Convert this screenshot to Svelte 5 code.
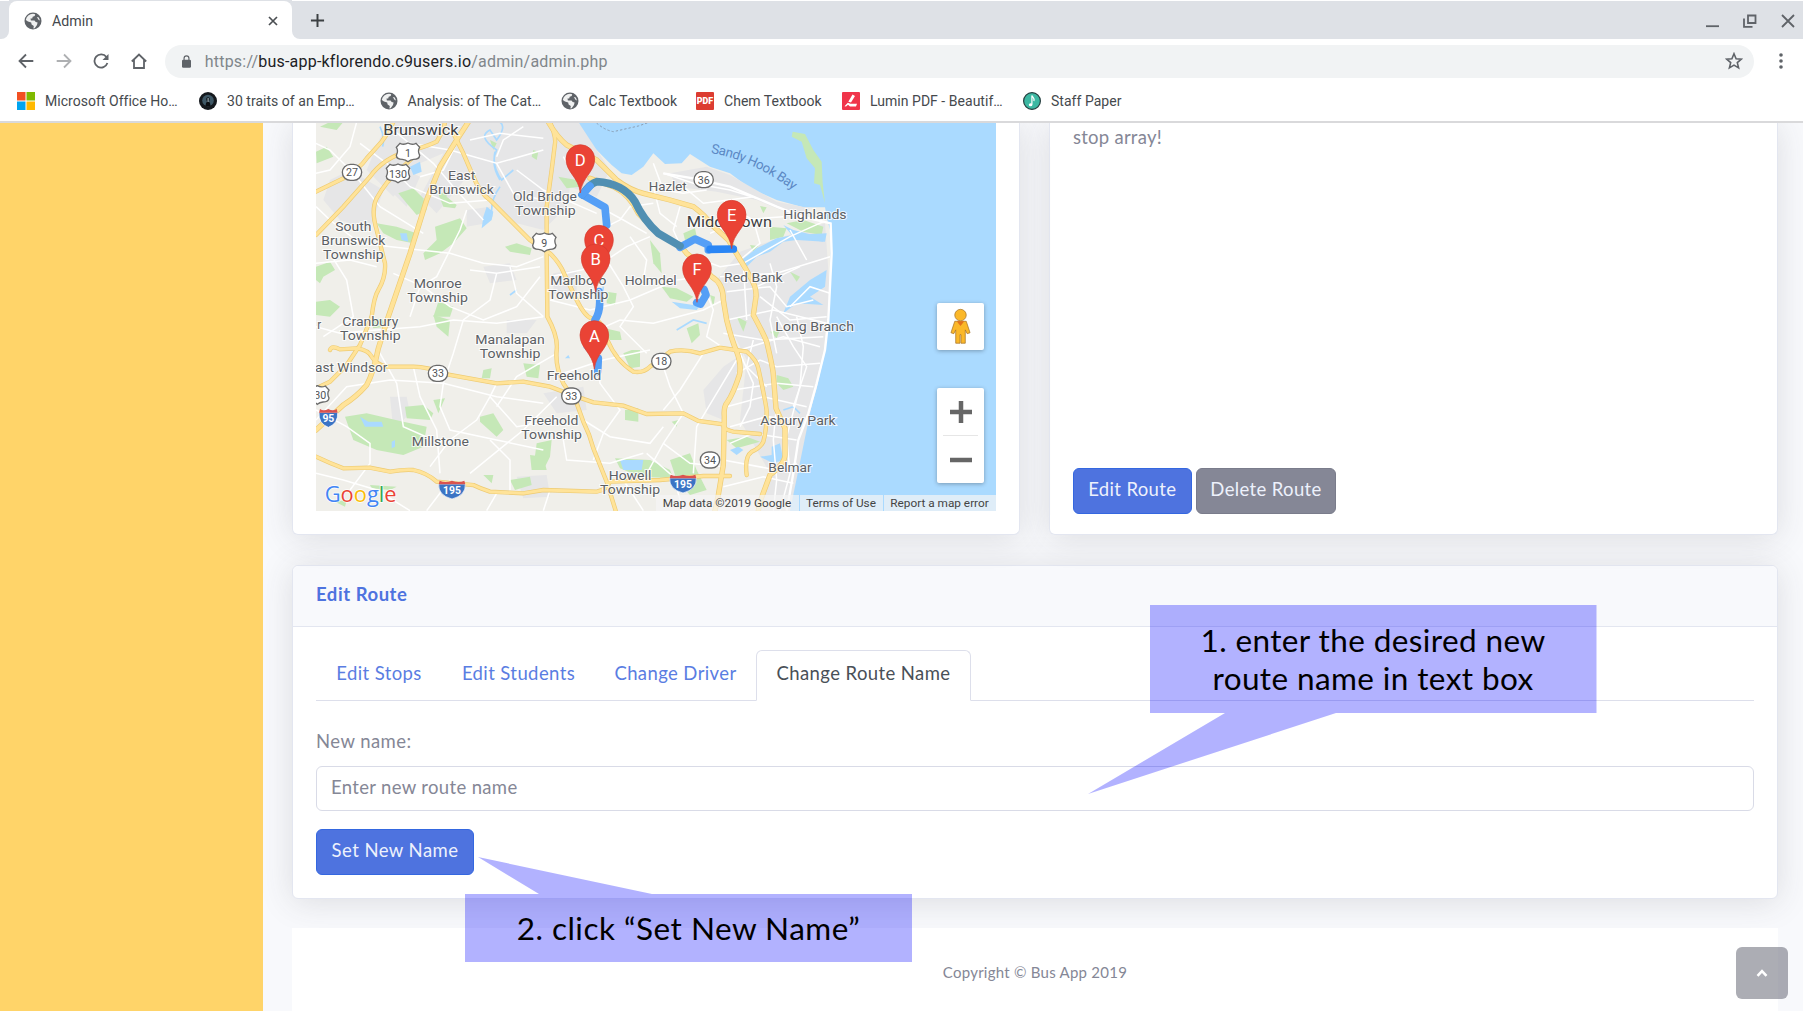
<script>
  const bookmarks = [
    { label: 'Microsoft Office Ho…', icon: 'ms' },
    { label: '30 traits of an Emp…', icon: 'traits' },
    { label: 'Analysis: of The Cat…', icon: 'globe' },
    { label: 'Calc Textbook', icon: 'globe' },
    { label: 'Chem Textbook', icon: 'pdf' },
    { label: 'Lumin PDF - Beautif…', icon: 'lumin' },
    { label: 'Staff Paper', icon: 'staff' }
  ];
  const tabs = ['Edit Stops', 'Edit Students', 'Change Driver', 'Change Route Name'];

  // Map geometry is in a space of three units per pixel.
  const highways = [
    'M18 215L100 175Q150 145 170 115L215 65Q238 35 250 6',
    'M18 345L100 260L180 170Q220 115 290 95Q350 80 380 65L400 30L405 6',
    'M185 590Q192 530 205 510Q228 470 225 430L200 330Q182 270 200 235Q230 180 270 150L310 110',
    'M185 590L150 675L110 735L60 785L18 805',
    'M430 40L460 100L490 170Q510 220 540 240L600 300L660 360L720 400Q750 430 762 460L800 540Q825 590 845 595Q880 600 892 660Q920 725 970 755Q1000 760 1020 740L1080 695Q1120 685 1170 700L1230 683L1310 695Q1340 720 1345 745Q1370 860 1370 875Q1370 930 1360 965Q1350 985 1325 995Q1303 1010 1310 1065',
    'M720 6Q738 50 735 70L725 150L710 260L710 400L712 590Q745 650 740 690Q735 740 760 790L800 850L820 905Q840 945 850 985L890 1085L917 1172',
    'M60 690Q65 675 90 688L140 685Q175 690 185 710Q200 735 230 740L310 740Q350 740 420 765L560 790L640 785L720 800L800 830L850 847L940 857L1010 882L1120 880L1165 903L1240 913Q1240 930 1270 935L1350 942',
    'M18 1010Q60 1030 100 1045L180 1043L240 1055Q280 1048 310 1050Q350 1058 380 1085L490 1095Q510 1105 540 1115L640 1120L700 1110L860 1115Q890 1110 900 1085L1050 1080L1180 1068L1260 1068'
  ];
  const trunks = [
    'M475 6L440 60L390 140L350 240L300 400L235 590L205 685Q190 760 170 795Q140 830 100 855L18 930',
    'M715 6Q740 50 770 75L860 120L920 180Q960 210 1000 220L1080 240L1150 260Q1190 290 1200 310L1255 360L1285 410Q1310 450 1320 470Q1340 500 1338 530L1330 585Q1360 640 1370 665Q1390 750 1390 765L1398 865L1425 925L1425 1005Q1425 1030 1380 1065L1350 1145L1345 1172',
    'M840 175L910 200Q960 225 985 280L1050 345L1110 375L1130 400Q1180 440 1205 470Q1240 490 1240 540L1250 600Q1265 660 1280 695Q1295 735 1288 765Q1270 820 1253 845Q1240 860 1243 890L1240 1035L1225 1125L1215 1172'
  ];
  const streets = [
    'M18 70L60 90L130 160L210 260L340 340', 'M140 6L120 80L60 150L18 160', 'M150 70L230 130L300 200L420 250L540 240',
    'M250 30L370 130L430 200L520 300', 'M440 70L400 150L330 170', 'M300 70L420 90L560 130L700 90', 'M480 60L570 40L700 55',
    'M560 110L580 60L640 20', 'M560 130L610 220L700 240', 'M620 150L700 210L860 280', 'M760 110L800 180L830 240L940 300L1010 340',
    'M18 260L60 300L150 370L330 390L420 400L520 430L620 440L700 410', 'M18 430L120 420L200 440', 'M60 400L110 480L130 590L40 650',
    'M250 460L340 500L420 560L520 600L620 560L690 470', 'M300 590L330 500L380 470L450 330L470 270', 'M480 450L560 460L690 440', 'M560 460L540 540L460 600L430 700L400 790',
    'M600 440L620 520L700 590', 'M720 470L860 440L950 380L1020 350', 'M720 540L840 570L960 540L1100 480L1180 470', 'M890 320L930 300L960 260L1030 250',
    'M890 420L940 500L970 560L930 620L1010 700', 'M960 350L1010 420L1000 480', 'M840 640L930 600L1030 610L1180 570L1240 540',
    'M18 620L90 640L200 630L330 620L430 600L560 610L700 590', 'M18 900L110 800L240 780L400 790L560 830L700 850', 'M210 700L260 790L280 920L370 960',
    'M310 740L330 830L380 930L390 1060', 'M400 790L390 860L420 930L560 960L700 990', 'M560 790L540 830L500 900L420 960L360 1040',
    'M540 830L620 920L740 900', 'M540 960L600 1020L600 1110', 'M18 870L110 920L180 970L180 1030L120 1110', 'M18 1060L100 1080L200 1110L300 1172',
    'M420 1080L350 1172', 'M740 700L620 770L560 860', 'M740 830L640 930L480 1060', 'M760 760L880 720L1020 690', 'M860 690L870 790L930 870L880 940L850 1020',
    'M760 960L770 1020L900 1030L1000 1000', 'M820 900L900 950L1020 970L1060 920', 'M1060 740L1080 800L1120 880L1060 970L1000 1080', 'M1180 700L1110 810L1060 870',
    'M1280 720L1220 820L1160 920L1150 1060', 'M1060 970L1140 1030L1240 1040', 'M1010 1000L1090 1070L1120 1172', 'M560 1120L530 1172', 'M720 1110L700 1172', 'M940 1080L1000 1172',
    'M1030 130L1060 210L1120 220L1190 210', 'M1060 160L1150 190L1260 210L1340 235', 'M1120 200L1180 250L1330 230', 'M1030 200L1050 280L1100 320', 'M1110 260L1090 330L1110 375',
    'M1240 250L1330 300L1350 370L1290 420', 'M1200 340L1290 300L1420 290', 'M1150 410L1230 440L1300 430L1440 350L1540 305', 'M1230 470L1400 460L1560 410', 'M1440 330L1490 420',
    'M1300 430L1310 600', 'M1340 500L1470 440', 'M1350 530L1440 600L1550 590', 'M1250 515L1380 500L1430 560L1510 540', 'M1170 470L1210 570L1190 650L1250 690', 'M1380 430L1400 500L1380 600L1400 700',
    'M1250 600L1390 570L1550 610', 'M1240 640L1360 660L1540 650', 'M1290 690L1420 650L1530 680', 'M1280 760L1350 720L1400 740L1530 730', 'M1270 810L1400 790L1510 800', 'M1250 860L1360 830L1490 860',
    'M1260 920L1370 890L1480 900', 'M1260 970L1330 940L1460 960', 'M1240 1020L1400 1050L1460 1030', 'M1240 1100L1360 1070L1450 1090', 'M1400 590L1450 680L1490 740L1450 860', 'M1460 590L1480 680L1470 800L1430 950L1440 1060L1410 1172',
    'M1290 700L1330 790L1320 860L1290 920', 'M1330 660L1310 740L1370 800', 'M1400 850L1390 960L1400 1080L1390 1172', 'M1440 560L1500 500L1560 520'
  ];
  const parks = [
    'M18 95L50 80L70 110L20 130Z', 'M30 20L60 6L100 6L80 30Z', 'M18 440L60 425L75 450L40 470L30 490L18 480Z', 'M265 220L310 205L340 235L350 270L320 285L290 250Z',
    'M200 310L260 320L320 340L310 370L260 360L220 340Z', 'M375 320L450 295L470 325L430 370L390 400L345 420L340 400L380 360Z', 'M385 222L410 215L410 230L440 255L435 265L400 260Z', 'M745 170L800 180L810 200L770 205Z',
    'M585 380L620 370L665 385L660 405L600 395Z', 'M385 545L430 560L420 590L370 590Z', 'M18 545L60 540L90 560L60 590L18 585Z', 'M890 515L920 520L915 555L890 550Z', 'M670 90L685 95L680 120L665 110Z', 'M540 60L560 70L550 90Z',
    'M105 890L170 880L280 905L350 920L340 980L280 1005L200 990L130 960Z', 'M285 860L340 855L370 880L360 900L290 895Z', 'M370 840L405 835L385 880Z', 'M510 890L550 880L580 930L560 950L510 905Z', 'M370 585L420 600L415 650L380 620Z',
    'M180 600L215 595L230 620L190 625Z', 'M640 730L690 735L685 775L650 770Z', 'M520 750L545 745L540 775L515 775Z', 'M940 700L965 690L990 690L990 740L960 745Z', 'M885 625L930 635L935 660L900 660Z', 'M945 870L985 865L985 905L945 900Z',
    'M680 970L725 960L720 1010L700 1050L670 1045Z', 'M660 1005L700 1010L710 1050L665 1050Z', 'M520 1065L550 1065L545 1090Z', 'M600 1080L660 1070L665 1095L615 1110Z', 'M915 1015L1020 1020L1080 1050L1090 1075L990 1070L930 1045Z', 'M180 1095L260 1100L240 1110L185 1105Z',
    'M1020 360L1050 400L1055 460L1030 430Z', 'M1120 340L1155 325L1160 350L1125 360Z', 'M1055 500L1100 505L1150 530L1130 545L1080 535Z', 'M1350 258L1370 262L1360 280Z', 'M1380 320L1430 325L1420 350L1380 360Z', 'M1430 310L1480 300L1540 320L1535 345L1480 335Z',
    'M1320 375L1345 378L1330 395Z', 'M1440 455L1470 470L1460 485Z', 'M1200 525L1215 530L1210 560Z', 'M1130 625L1165 610L1170 645L1145 670Z', 'M1280 590L1310 605L1300 635Z', 'M1380 635L1410 630L1400 655Z', 'M1400 765L1435 775L1450 800L1420 810L1400 790Z',
    'M1250 960L1310 950L1350 965L1280 985Z', 'M1080 1020L1140 1000L1160 1050L1190 1110L1140 1125L1100 1080Z', 'M1085 905L1105 900L1100 920Z', 'M75 1145L110 1140L105 1160Z'
  ];
  const labels = [
    ['Brunswick', 333, 44, 226, 44, true], ['East', 455, 180, 82], ['Brunswick', 455, 222, 194], ['Old Bridge', 705, 244, 192], ['Township', 706, 286, 182],
    ['South', 130, 332, 108], ['Brunswick', 130, 374, 192], ['Township', 130, 416, 182], ['Monroe', 383, 503, 144], ['Township', 383, 545, 182],
    ['Marlboro', 805, 496, 168], ['Township', 805, 538, 180], ['Holmdel', 1022, 494, 156], ['Hazlet', 1073, 213, 114], ['Middletown', 1258, 320, 256, 44, true],
    ['Highlands', 1515, 297, 190], ['Red Bank', 1330, 487, 176], ['Cranbury', 181, 617, 168], ['Township', 181, 659, 182], ['r', 28, 628, 12],
    ['East Windsor', 112, 755, 240], ['Manalapan', 600, 672, 208], ['Township', 600, 714, 182], ['Freehold', 792, 780, 164], ['Freehold', 724, 916, 162],
    ['Township', 725, 958, 182], ['Millstone', 391, 977, 172], ['Howell', 960, 1079, 128], ['Township', 960, 1121, 180], ['Long Branch', 1514, 632, 236], ['Asbury Park', 1464, 915, 226], ['Belmar', 1440, 1056, 130]
  ];
  const circles = [[126, 157, '27'], [1181, 179, '36'], [384, 760, '33'], [784, 828, '33'], [1054, 724, '18'], [1200, 1020, '34']];
  const usShields = [[294, 97, '1'], [264, 160, '130'], [703, 367, '9'], [22, 825, '130']];
  const interstates = [[55, 893, '95', 56], [426, 1108, '195', 80], [1119, 1090, '195', 80]];
  const pins = [[867, 461, 'C'], [857, 517, 'B'], [811, 219, 'D'], [1265, 386, 'E'], [1161, 547, 'F'], [853, 747, 'A']];
</script>

{#snippet globe()}
  <svg class="ico" viewBox="0 0 18 18"><circle cx="9" cy="9" r="8.5" fill="#5f6368" /><path d="M9 1.8l2.2.5-.5 1.7-2 .8-.5 1.6-1.7.2.4 1.9h3.6l1.2 1.5 1.9.5-.6 2.500-2.300 3.200-1.300.300.400-2.600-2.200-1.300-.400-2-3.200-1L1.800 8A7.300 7.300 0 0 1 9 1.800zM12.800 5l2 .400 1.200 3-1.500-.700z" fill="#fff" opacity=".9" /></svg>
{/snippet}

<div class="window">
  <header class="chrome">
    <div class="strip">
      <div class="prev"></div>
      <div class="tab">
        {@render globe()}
        <span>Admin</span>
        <svg class="close" viewBox="0 0 12 12"><path d="M2 2l8 8M10 2l-8 8" /></svg>
      </div>
      <div class="fill"><svg class="plus" viewBox="0 0 16 16"><path d="M8 1v14M1 8h14" /></svg></div>
      <div class="winctl">
        <svg viewBox="0 0 14 14"><path d="M0 12.2h13" /></svg>
        <svg viewBox="0 0 14 14"><path d="M5 1.5h7.5V9H5zM1 4.5v8.3h8.5" /></svg>
        <svg viewBox="0 0 14 14"><path d="M1 1l12 12M13 1L1 13" /></svg>
      </div>
    </div>
    <div class="toolbar">
      <svg class="nav" viewBox="0 0 16 16"><path d="M15.3 8H1.6M8 1.5L1.5 8 8 14.5" /></svg>
      <svg class="nav dim" viewBox="0 0 16 16"><path d="M.7 8h13.7M8 1.5L14.5 8 8 14.5" /></svg>
      <svg class="nav" viewBox="0 0 16 16"><path d="M13.4 4A6.6 6.6 0 1 0 14.400 10" /><path d="M15.500 1v6h-6z" class="solid" /></svg>
      <svg class="nav" viewBox="0 0 16 16"><path d="M.8 8.500L8 1.500l7.200 7M3 7v8h10V7" /></svg>
      <div class="omni">
        <svg class="lock" viewBox="0 0 10 14"><path d="M1.500 5h7Q10 5 10 6.500v6Q10 14 8.500 14h-7Q0 14 0 12.500v-6Q0 5 1.500 5z" fill="#5f6368" /><path d="M2.300 6V3.500a2.700 2.700 0 0 1 5.400 0V6" fill="none" stroke="#5f6368" stroke-width="1.300" /></svg>
        <div class="url">https://<b>bus-app-kflorendo.c9users.io</b>/admin/admin.php</div>
        <svg class="star" viewBox="0 0 18 18"><path d="M9 1.700l2.100 5 5.300.4-4.100 3.500 1.300 5.300L9 13.100l-4.600 2.800 1.300-5.300L1.600 7.100l5.300-.4z" /></svg>
      </div>
      <svg class="dots" viewBox="0 0 4 16"><circle cx="2" cy="2" r="1.800" /><circle cx="2" cy="8" r="1.800" /><circle cx="2" cy="14" r="1.800" /></svg>
    </div>
    <nav class="bookmarks">
      {#each bookmarks as b}
        <div class="bm">
          {#if b.icon === 'ms'}
            <svg class="ico" viewBox="0 0 18 18"><path d="M0 0h8.500v8.500H0z" fill="#f25022" /><path d="M9.500 0H18v8.500H9.500z" fill="#7fba00" /><path d="M0 9.500h8.500V18H0z" fill="#00a4ef" /><path d="M9.500 9.500H18V18H9.500z" fill="#ffb900" /></svg>
          {:else if b.icon === 'traits'}
            <svg class="ico" viewBox="0 0 18 18"><circle cx="9" cy="9" r="9" fill="#15191e" /><circle cx="9" cy="8.500" r="5.800" fill="#3f5866" /><path d="M6.500 14q.2-3.500 1.500-4.500-1-1.500-.6-3.500Q9 4.300 10.600 6q.4 2-.6 3.500 1.400 1 1.500 4.500z" fill="#0b0e12" /><path d="M8.600 6h1v4h-1z" fill="#b9ced8" /></svg>
          {:else if b.icon === 'globe'}
            {@render globe()}
          {:else if b.icon === 'pdf'}
            <svg class="ico" viewBox="0 0 18 18"><rect width="18" height="18" rx="1" fill="#dc3c31" /><text x="9" y="12.300" text-anchor="middle" textLength="16.500" lengthAdjust="spacingAndGlyphs" class="pdf">PDF</text></svg>
          {:else if b.icon === 'lumin'}
            <svg class="ico" viewBox="0 0 18 18"><rect width="18" height="18" rx="1" fill="#f0354b" /><path d="M10.500 2.500L13 4 9 10.500l-2.700-.8zM5.800 10.700l2.700 1H15l-1 2.800H8l-2-1.700-2 1.700-1.500-.3z" fill="#fff" /></svg>
          {:else}
            <svg class="ico" viewBox="0 0 18 18"><circle cx="9" cy="9" r="8.400" fill="#3cb8a2" stroke="#263d3e" stroke-width="1.200" /><ellipse cx="7.600" cy="12.700" rx="1.800" ry="1.500" fill="#fff" /><path d="M8.900 12.500V3.500c.5 2 3 2.200 2 5.500" fill="none" stroke="#fff" stroke-width="1.200" /></svg>
          {/if}
          <span>{b.label}</span>
        </div>
      {/each}
    </nav>
  </header>

  <div class="page">
    <aside class="sidebar"></aside>
    <main>
      <div class="row">
        <section class="card mapcard">
          <svg class="map" viewBox="18 6 2040 1167" preserveAspectRatio="none">
            <path d="M0 0H2060V1180H0z" fill="#aadaff" />
            <path d="M0 0H805L820 60L860 90L905 135L935 160L965 165L1000 140L1030 100L1065 132L1115 130L1140 102L1200 140L1260 160L1320 205L1400 240L1480 262L1545 262L1552 300L1563 340L1560 520L1553 600L1547 685L1520 805L1500 875L1475 965L1460 1045L1445 1125L1430 1180H0z" fill="#f0efea" />
            <g fill="#e6e6e7">
              <path d="M230 6H805L860 90L900 150L860 230L780 200L770 260L700 330L620 310L540 240L480 160L380 280L330 230L400 100L330 130L250 230L170 150z" />
              <path d="M60 180L120 150L220 210L180 330L90 300L40 240zM250 130L330 170L290 260L230 200zM470 270L540 260L530 310L470 320zM730 460L800 450L800 530L730 520zM590 600L680 600L650 640L590 640zM700 820L820 800L830 870L740 880zM240 830L290 830L300 880L250 930z" />
              <path d="M1080 160L1190 140L1260 165L1400 245L1500 265L1460 290L1340 240L1220 215L1100 200z" />
              <path d="M1290 395L1420 350L1545 310L1560 520L1540 700L1500 880L1440 1173H1340L1380 1060L1290 900L1310 720L1250 600L1220 480z" />
              <path d="M1180 810L1240 740L1300 700L1240 900L1190 880zM620 1070L710 1065L720 1130L640 1135zM520 440L600 430L620 480L540 490z" />
            </g>
            <g fill="#c5e8b7">{#each parks as d}<path {d} />{/each}<path d="M1448 35L1485 42L1510 90L1535 125L1538 190L1545 250L1530 195L1512 190L1515 145L1490 115L1475 65L1445 50z" /></g>
            <g fill="#aadaff">
              <path d="M1295 420L1340 385L1400 355L1450 345L1550 340L1545 365L1460 360L1420 365L1380 395L1340 410L1310 440z" />
              <path d="M1440 530L1500 480L1550 450L1545 500L1500 530L1540 555L1460 550L1420 580zM1420 315L1450 330L1530 350L1540 365L1450 350zM1385 980L1410 970L1420 1020L1390 1030L1350 1010L1385 1005zM1260 990L1285 980L1300 990L1280 1005zM930 1020L1000 1020L995 1050L940 1050zM150 890L175 905L215 905L220 920L165 920zM1085 545L1150 555L1180 545L1160 570L1110 565z" />
              <path d="M270 340L290 340L295 365L275 360zM530 260L550 275L545 300L515 325L520 290zM300 140L330 125L335 155L310 165zM765 715L775 705L780 715zM245 965L255 960L255 980L245 985z" />
            </g>
            <g class="brook"><path d="M570 180Q540 130 560 90Q500 50 540 30L560 60Q590 20 570 6M570 200Q540 240 545 290M555 95Q545 140 575 180L610 150M210 20Q225 50 218 80M1100 630L1150 600L1190 610M880 500L870 590M600 525L620 510M1420 870L1450 860L1470 880M820 680L840 700" /></g>
            <g class="street">{#each streets as d}<path {d} />{/each}</g>
            <path d="M1060 160L1150 175L1260 200L1400 260L1475 290L1540 305L1562 310L1565 400L1555 600L1545 690L1520 790L1495 880L1465 960L1450 1060L1430 1172" class="shore" />
            <g class="edge">{#each highways as d}<path {d} />{/each}</g>
            <g class="edge thick">{#each trunks as d}<path {d} />{/each}</g>
            <g class="road">{#each highways as d}<path {d} />{/each}</g>
            <g class="road thick">{#each trunks as d}<path {d} />{/each}</g>
            <path d="M850 0Q880 30 910 35L985 18L1020 6" fill="none" stroke="#8a9fb5" stroke-width="3" stroke-dasharray="7 6" />
            <g class="route">
              <path d="M817 224L885 262L890 315M867 515Q875 570 855 600L850 640M865 715L863 755M1110 382L1155 357L1195 375L1195 390M1182 508L1188 525L1172 552L1160 548" />
              <path d="M817 224Q840 190 860 185Q940 190 975 245Q1000 300 1045 340L1110 378" class="steel" />
              <path d="M1200 388L1270 387" class="strong" />
              <path d="M817 224L840 198" />
            </g>
            {#each labels as [text, x, y, w, size, dark]}
              <text {x} {y} textLength={w} lengthAdjust="spacingAndGlyphs" class="place" class:dark font-size={size || 40}>{text}</text>
            {/each}
            <path id="bay" d="M1202 99Q1334 120 1466 224" fill="none" />
            <text class="bay"><textPath href="#bay" textLength="274">Sandy Hook Bay</textPath></text>
            {#each circles as [x, y, n]}
              <rect x={x - 29} y={y - 24} width="58" height="48" rx="24" class="sign" />
              <text {x} y={y + 12} class="num">{n}</text>
            {/each}
            {#each usShields as [x, y, n]}
              <path transform="translate({x} {y})" d="M-24 -27Q-12 -21 0 -28Q12 -21 24 -27L35 -15Q28 -5 35 9Q34 21 17 21Q7 22 0 28Q-7 22 -17 21Q-34 21 -35 9Q-28 -5 -35 -15z" class="sign" />
              <text {x} y={y + 13} class="num">{n}</text>
            {/each}
            {#each interstates as [x, y, n, w]}
              <path d="M{x - w / 2} {y - 16}H{x + w / 2}Q{x + w / 2 + 2} {y + 18} {x} {y + 29}Q{x - w / 2 - 2} {y + 18} {x - w / 2} {y - 16}z" fill="#3b74c4" stroke="#fff" stroke-width="2" />
              <path d="M{x - w / 2 + 3} {y - 26}Q{x - w / 4} {y - 18} {x} {y - 26}Q{x + w / 4} {y - 18} {x + w / 2 - 3} {y - 26}L{x + w / 2} {y - 15}H{x - w / 2}z" fill="#d9534f" />
              <text {x} y={y + 13} class="num inter">{n}</text>
            {/each}
            {#each pins as [x, y, n]}
              <path transform="translate({x} {y})" d="M0 0C-5 -48 -43 -62 -43 -102A43 43 0 0 1 43 -102C43 -62 5 -48 0 0z" fill="#ea4335" stroke="#d43b2f" stroke-width="2" />
              <text {x} y={y - 82} class="letter">{n}</text>
            {/each}
            <text x="44" y="1146" textLength="216" lengthAdjust="spacingAndGlyphs" class="google"><tspan fill="#4285f4">G</tspan><tspan fill="#ea4335">o</tspan><tspan fill="#fbbc05">o</tspan><tspan fill="#4285f4">g</tspan><tspan fill="#34a853">l</tspan><tspan fill="#ea4335">e</tspan></text>
          </svg>
          <div class="pegman"><svg viewBox="0 0 22 38"><g fill="#fbb829" stroke="#a9762a" stroke-width=".8"><path d="M5 13h12l4 12-3 1-2-4v14h-4.500V27h-1V36H6V22l-2 4-3-1z" /><circle cx="11" cy="6.500" r="6" /></g><path d="M7 13h8l-4 5z" fill="#e2711d" /></svg></div>
          <div class="zoom"><svg viewBox="0 0 22 22"><path d="M11 0v22M0 11h22" /></svg><i></i><svg viewBox="0 0 22 22"><path d="M0 11h22" /></svg></div>
          <div class="legal"><span class="l1">Map data ©2019 Google</span><span class="l2">Terms of Use</span><span class="l3">Report a map error</span></div>
        </section>
        <section class="card info">
          <p>stop array!</p>
          <div class="actions"><button class="btn edit">Edit Route</button><button class="btn grey">Delete Route</button></div>
        </section>
      </div>

      <section class="card editor">
        <h6>Edit Route</h6>
        <div class="body">
          <ul>
            {#each tabs as t, i}<li class:active={i === 3}>{t}</li>{/each}
          </ul>
          <label for="name">New name:</label>
          <input id="name" placeholder="Enter new route name" />
          <button class="btn set">Set New Name</button>
        </div>
      </section>

      <footer>Copyright © Bus App 2019</footer>
    </main>
  </div>

  <div class="totop"><svg viewBox="0 0 12 8"><path d="M1.500 6.800L6 2.200l4.500 4.600" /></svg></div>

  <div class="callout one">
    <svg viewBox="0 0 509 189"><path d="M62 0H508.500V108H248L0 189L137 108H62z" /></svg>
    <p>1. enter the desired new<br />route name in text box</p>
  </div>
  <div class="callout two">
    <svg viewBox="0 0 447 105"><path d="M0 37H74L13 0L187 37H447V105H0z" /></svg>
    <p>2. click “Set New Name”</p>
  </div>
</div>

<style>
  :global(body) { margin: 0; overflow: hidden; }
  * { box-sizing: border-box; }
  svg { display: block; flex: none; }
  .window { position: relative; width: 1803px; height: 1011px; overflow: hidden; display: flex; flex-direction: column; font-family: Lato, sans-serif; background: #fff; }

  .chrome { height: 122.500px; flex: none; background: #fff; border-bottom: 2px solid #d9d9db; font-family: Roboto, sans-serif; display: flex; flex-direction: column; padding-top: 1px; position: relative; z-index: 1; }
  .strip { height: 38px; display: flex; }
  .prev { width: 9px; background: #dee1e6; border-bottom-right-radius: 8px; }
  .tab { width: 283px; display: flex; align-items: center; padding: 1px 13px 0 15px; font-size: 14.200px; color: #45494d; background: #fff; border-radius: 8px 8px 0 0; box-shadow: 0 -8px 0 #dee1e6; }
  .tab span { flex: 1; margin-left: 10px; }
  .close { width: 12px; height: 12px; stroke: #4b4f53; stroke-width: 1.700; }
  .fill { flex: 1; background: #dee1e6; border-bottom-left-radius: 8px; display: flex; align-items: center; padding-left: 18px; }
  .plus { width: 15px; height: 15px; stroke: #3c4043; stroke-width: 2.100; }
  .winctl { background: #dee1e6; display: flex; align-items: center; gap: 24px; padding: 2px 8px 0 0; }
  .winctl svg { width: 14px; height: 14px; fill: none; stroke: #5f6368; stroke-width: 1.800; }
  .winctl svg:first-child { margin-right: -1px; }
  .ico { width: 18px; height: 18px; }
  .toolbar { height: 43px; display: flex; align-items: center; padding: 1px 20px 0 18px; }
  .nav { width: 16px; height: 16px; margin-right: 21.700px; fill: none; stroke: #5f6368; stroke-width: 1.800; }
  .nav .solid { fill: #5f6368; stroke: none; }
  .dim { opacity: .5; }
  .omni { margin-left: -4px; width: 1589px; height: 33px; border-radius: 17px; background: #f1f3f4; display: flex; align-items: center; padding: 0 11px 0 17px; }
  .lock { width: 9px; height: 13px; }
  .url { flex: 1; margin-left: 14px; font-size: 16px; color: #80868b; letter-spacing: .21px; white-space: nowrap; }
  .url b { font-weight: 400; color: #202124; }
  .star { width: 18px; height: 18px; fill: none; stroke: #5f6368; stroke-width: 1.600; }
  .dots { width: 4px; height: 16px; margin-left: auto; fill: #5f6368; }
  .bookmarks { height: 38px; display: grid; grid-template-columns: 182px 180.500px 181px 135.500px 146px 181px 120px; padding-left: 17px; align-items: center; }
  .bm { display: flex; align-items: center; gap: 10px; font-size: 14px; letter-spacing: .03px; color: #45494d; white-space: nowrap; }
  .pdf { font: 900 8.500px Roboto, sans-serif; fill: #fff; }

  .page { flex: 1; display: flex; min-height: 0; margin-top: -.500px; }
  .sidebar { width: 263px; background: #ffd469; flex: none; }
  main { width: 1540px; padding: 0 25px 0 29px; background: #f8f9fc; overflow: hidden; }
  .row { display: flex; gap: 30px; height: 413px; margin-bottom: 30px; }
  .card { background: #fff; border: 1px solid #e3e6f0; border-radius: 6px; box-shadow: 0 3px 33px rgba(58, 59, 69, .15); }
  .row .card { width: 727.500px; flex: none; border-top: 0; border-radius: 0 0 6px 6px; }
  .row .info { width: 728.500px; margin-left: -.500px; }
  .mapcard { position: relative; padding-left: 23px; }
  .map { width: 680px; height: 389px; font-family: Roboto, sans-serif; }
  .street { fill: none; stroke: #fff; stroke-width: 4.500; }
  .shore { fill: none; stroke: #fff; stroke-width: 7; }
  .brook { fill: none; stroke: #aadaff; stroke-width: 5; }
  .edge { fill: none; stroke: #eecb72; stroke-width: 13; stroke-linecap: round; }
  .road { fill: none; stroke: #ffe399; stroke-width: 9; stroke-linecap: round; }
  .edge.thick { stroke-width: 16; }
  .road.thick { stroke-width: 12; }
  .route { fill: none; stroke: #559ff6; stroke-width: 23; stroke-linecap: round; stroke-linejoin: round; }
  .route .strong { stroke: #2a86f5; }
  .route .steel { stroke: #508fb2; }
  .place { text-anchor: middle; fill: #5c6064; stroke: #fff; stroke-width: 6; stroke-opacity: .8; paint-order: stroke; }
  .place.dark { fill: #3d4042; }
  .bay { font-size: 40px; fill: #5b88c4; }
  .sign { fill: #fff; stroke: #6b6b6b; stroke-width: 4; }
  .num { font-size: 32px; text-anchor: middle; fill: #505356; }
  .num.inter { fill: #fff; font-weight: 700; font-size: 31px; }
  .letter { font-size: 50px; fill: #fff; text-anchor: middle; }
  .google { font: 500 66px "Open Sans", sans-serif; stroke: #fff; stroke-width: 4; paint-order: stroke; }
  .pegman, .zoom { position: absolute; left: 644px; width: 47px; background: #fff; border-radius: 2px; box-shadow: 0 1px 4px rgba(0, 0, 0, .3); display: flex; align-items: center; }
  .pegman { top: 181px; height: 47px; justify-content: center; }
  .pegman svg { width: 21px; height: 38px; }
  .zoom { top: 266px; height: 95px; flex-direction: column; justify-content: center; gap: 12.500px; }
  .zoom svg { width: 22px; height: 22px; stroke: #666; stroke-width: 4.500; }
  .zoom i { width: 35px; height: 1px; background: #e6e6e6; }
  .legal { position: absolute; right: 23px; top: 373px; display: flex; gap: 1px; font: 11.800px/16px Roboto, sans-serif; color: #444; }
  .legal span { height: 16px; background: rgba(245, 245, 245, .7); text-align: center; white-space: nowrap; }
  .l1 { width: 143px; }
  .l2 { width: 83px; }
  .l3 { width: 112px; }

  .info { padding: 0 23px 20px; display: flex; flex-direction: column; justify-content: space-between; color: #858796; }
  .info p { margin: 3px 0 0; font-size: 18.500px; line-height: 24px; letter-spacing: .25px; }
  .actions { display: flex; gap: 4.500px; }
  .btn { border: 1px solid #3467e0; border-radius: 6px; height: 46px; background: #4e73df; color: #edf1fc; font: 18.500px/26px Lato, sans-serif; letter-spacing: .36px; padding: 0 0 4px; text-align: center; }
  .edit { width: 118.500px; }
  .grey { width: 140px; background: #858796; border-color: #7a7c8b; }

  .editor { height: 334px; }
  h6 { margin: 0; height: 61px; background: #f8f9fc; border-bottom: 1px solid #e3e6f0; border-radius: 6px 6px 0 0; padding: 0 23px; font: 700 18.500px/56px Lato, sans-serif; letter-spacing: .55px; color: #4e73df; }
  .body { padding: 23px 23px 0; }
  ul { list-style: none; margin: 0; padding: 0; display: flex; height: 51px; border-bottom: 1px solid #dddfeb; font-size: 18.500px; color: #5a7de2; letter-spacing: .4px; }
  li { height: 51px; line-height: 44px; white-space: nowrap; text-align: center; border: 1px solid transparent; width: 126px; }
  li:nth-child(2) { width: 153px; }
  li:nth-child(3) { width: 161px; }
  li.active { width: 215px; background: #fff; color: #495057; border-color: #dddfeb #dddfeb #fff; border-radius: 6px 6px 0 0; }
  label { display: block; margin-top: 28px; font-size: 18.500px; line-height: 24px; color: #858796; letter-spacing: .45px; }
  input { display: block; width: 100%; height: 45px; margin-top: 13px; border: 1px solid #d9dbe7; border-radius: 6px; padding: 0 15px 3px 14px; font: 18.500px Lato, sans-serif; letter-spacing: .34px; background: #fff; }
  input::placeholder { color: #858796; opacity: 1; }
  .set { display: block; margin-top: 18px; width: 158px; letter-spacing: .45px; }
  footer { margin-top: 29px; height: 100px; background: #fff; text-align: center; font-size: 15px; line-height: 89px; color: #858796; letter-spacing: .25px; }

  .totop { position: absolute; left: 1735.500px; top: 947px; width: 52px; height: 52px; border-radius: 6px; background: rgba(90, 92, 105, .5); display: flex; align-items: center; justify-content: center; z-index: 2; }
  .totop svg { width: 12px; height: 8px; fill: none; stroke: #fff; stroke-width: 2.600; }
  .callout { position: absolute; z-index: 3; color: #000; text-align: center; font-size: 31.500px; line-height: 38px; letter-spacing: .4px; }
  .callout svg { fill: rgba(0, 0, 255, .3); }
  .callout p { position: absolute; margin: 0; width: 447px; }
  .one { left: 1087.500px; top: 605px; }
  .one svg { width: 509px; height: 189px; }
  .one p { left: 62px; top: 16px; }
  .two { left: 465px; top: 857px; letter-spacing: .5px; }
  .two svg { width: 447px; height: 105px; }
  .two p { left: 0; top: 52px; }
</style>
